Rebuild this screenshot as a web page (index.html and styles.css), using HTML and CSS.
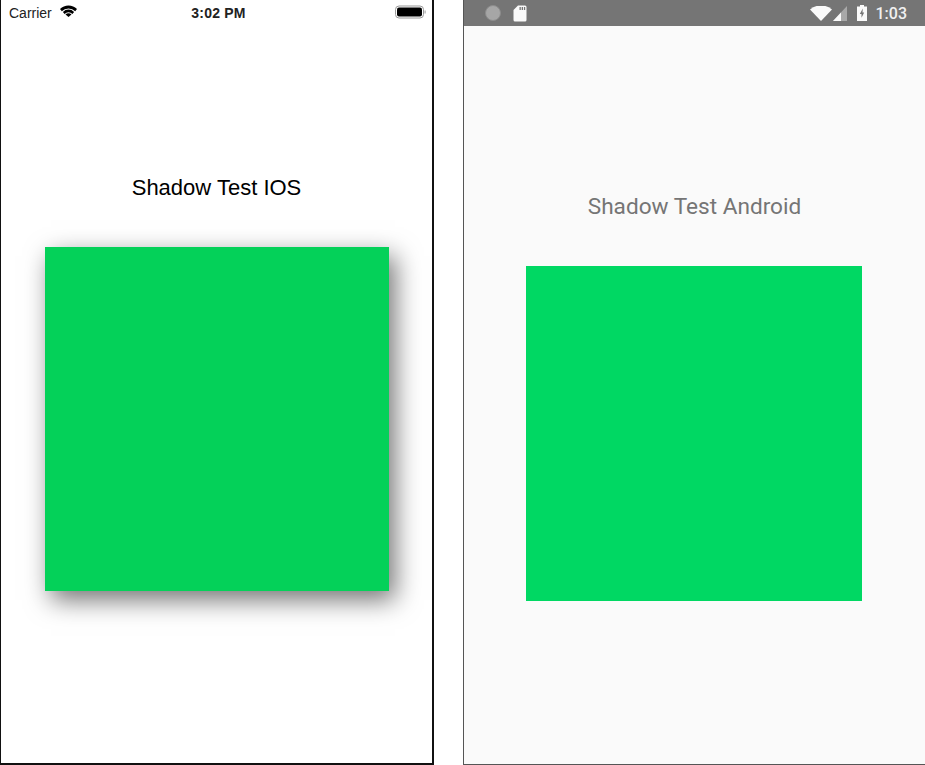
FILE: index.html
```html
<!DOCTYPE html>
<html lang="en">
<head>
    <meta charset="UTF-8">
    <meta name="viewport" content="width=device-width, initial-scale=1.0">
    <title>Shadow Test</title>
    <link rel="stylesheet" href="styles.css">
</head>
<body>

<div class="phone phone-ios">
    <div class="ios-status">
        <div class="ios-left">
            <span>Carrier</span>
            <svg class="ios-wifi" width="17" height="12" viewBox="0 0 17 12">
                <path d="M0 4 A12 12 0 0 1 17 4 L15.2 6.2 A9.4 9.4 0 0 0 1.8 6.2 Z" fill="#000"/>
                <path d="M2.9 6.9 A8 8 0 0 1 14.1 6.9 L12.4 8.9 A5.4 5.4 0 0 0 4.6 8.9 Z" fill="#000"/>
                <path d="M5.5 9.6 A4.2 4.2 0 0 1 11.5 9.6 L8.5 12 Z" fill="#000"/>
            </svg>
        </div>
        <span class="ios-time">3:02 PM</span>
        <svg class="ios-battery" width="31" height="14" viewBox="0 0 31 14">
            <rect x="0.5" y="1" width="28" height="12" rx="3.5" fill="none" stroke="#999" stroke-width="1"/>
            <rect x="2" y="2.5" width="25" height="9" rx="2" fill="#000"/>
            <rect x="29.5" y="5.5" width="1.2" height="3" fill="#aaa"/>
        </svg>
    </div>
    <div class="ios-title">Shadow Test IOS</div>
    <div class="ios-box"></div>
</div>

<div class="phone phone-android">
    <div class="android-status">
        <div class="android-left">
            <span class="android-dot"></span>
            <svg width="14" height="17" viewBox="0 0 14 17">
                <path d="M5 0.5 H12 A1.5 1.5 0 0 1 13.5 2 V15 A1.5 1.5 0 0 1 12 16.5 H2 A1.5 1.5 0 0 1 0.5 15 V5 Z" fill="#fafafa"/>
                <rect x="6.5" y="2" width="1.3" height="3" fill="#757575"/>
                <rect x="8.7" y="2" width="1.3" height="3" fill="#757575"/>
                <rect x="10.9" y="2" width="1.3" height="3" fill="#757575"/>
            </svg>
        </div>
        <div class="android-right">
            <svg width="22" height="15" viewBox="0 0 22 15">
                <path d="M0 3.5 A17 17 0 0 1 22 3.5 L11 15 Z" fill="#fafafa"/>
            </svg>
            <svg class="android-signal" width="14" height="15" viewBox="0 0 14 15">
                <path d="M14 0 V15 H0 Z" fill="#a8a8a8"/>
                <path d="M8 6.4 V15 H0 Z" fill="#fafafa"/>
            </svg>
            <svg class="android-battery" width="10" height="16" viewBox="0 0 10 16">
                <path d="M3 0 H7 V1.5 H10 V16 H0 V1.5 H3 Z" fill="#fafafa"/>
                <path d="M5.8 3.5 L2.8 9 H4.5 V12.8 L7.2 7.5 H5.5 Z" fill="#757575"/>
            </svg>
            <span class="android-time">1:03</span>
        </div>
    </div>
    <div class="android-title">Shadow Test Android</div>
    <div class="android-box"></div>
</div>

</body>
</html>
```

FILE: styles.css
```css
html, body {
    margin: 0;
    height: 100%;
}
body {
    display: flex;
    justify-content: space-between;
    background: #fff;
    overflow: hidden;
}
.phone {
    box-sizing: border-box;
    height: 765px;
    display: flex;
    flex-direction: column;
    align-items: center;
}
.phone-ios {
    width: 434px;
    background: #fff;
    border-left: 1px solid #111;
    border-right: 2px solid #111;
    border-bottom: 2px solid #111;
}
.phone-android {
    width: 462px;
    padding-right: 2px;
    background: #fafafa;
    border-left: 1px solid #555;
    border-bottom: 1px solid #555;
}
.ios-status {
    align-self: stretch;
    height: 25px;
    padding: 0 6px 0 8px;
    display: grid;
    grid-template-columns: 1fr auto 1fr;
    align-items: center;
    font-family: "Liberation Sans", Arial, sans-serif;
    font-size: 14px;
    color: #222;
}
.ios-left {
    display: flex;
    align-items: center;
    gap: 8px;
}
.ios-wifi {
    margin-bottom: 3px;
}
.ios-time {
    font-weight: bold;
    letter-spacing: 0.2px;
    margin-left: 2px;
}
.ios-battery {
    justify-self: end;
    margin-bottom: 1px;
}
.ios-title {
    margin-top: 150px;
    height: 26px;
    line-height: 26px;
    font-family: "Liberation Sans", Arial, sans-serif;
    font-size: 22px;
    color: #000;
}
.ios-box {
    margin-top: 46px;
    width: 344px;
    height: 344px;
    background: #04d159;
    box-shadow: 6px 9px 24px rgba(0, 0, 0, 0.55);
}
.android-status {
    align-self: stretch;
    box-sizing: border-box;
    height: 26px;
    margin-right: -2px;
    padding: 0 18px 0 21px;
    display: flex;
    align-items: center;
    justify-content: space-between;
    background: #757575;
}
.android-left {
    display: flex;
    align-items: center;
    gap: 12px;
}
.android-dot {
    box-sizing: border-box;
    width: 16px;
    height: 16px;
    border-radius: 50%;
    background: #a6a6a6;
    border: 1px solid #8c8c8c;
}
.android-right {
    display: flex;
    align-items: center;
}
.android-signal {
    margin-left: 1px;
}
.android-battery {
    margin-left: 10px;
}
.android-time {
    margin-left: 9px;
    font-family: Roboto, Arial, sans-serif;
    font-size: 16px;
    font-weight: 500;
    color: #f0f0f0;
}
.android-title {
    margin-top: 167px;
    margin-left: 2px;
    height: 28px;
    line-height: 28px;
    font-family: Roboto, Arial, sans-serif;
    font-size: 22.6px;
    color: #757575;
}
.android-box {
    margin-top: 45px;
    width: 336px;
    height: 335px;
    background: #00d863;
}
```
